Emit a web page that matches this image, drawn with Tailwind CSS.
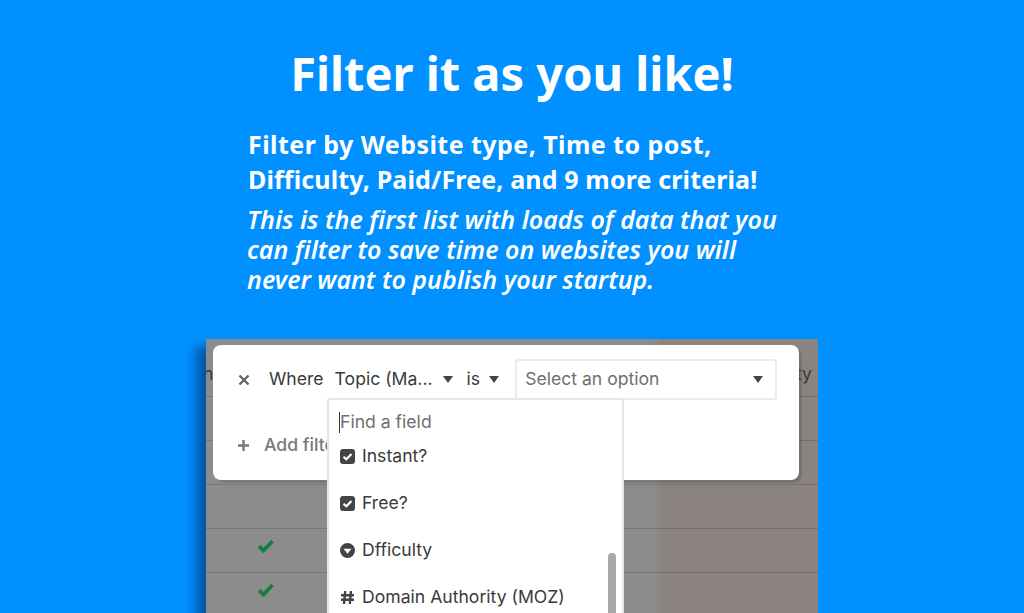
<!doctype html>
<html>
<head>
<meta charset="utf-8">
<script src="https://cdn.jsdelivr.net/npm/@tailwindcss/browser@4"></script>
</head>
<body class="m-0 h-[613px] w-[1024px] overflow-hidden bg-[#0090ff] font-['Noto_Sans','Lato',sans-serif] text-white">
  <div class="flex flex-col items-center">
    <h1 class="mt-[43px] h-[60px] text-center text-[47px] leading-[60px] font-bold">Filter it as you like!</h1>
    <div class="mt-[24px] w-[530px] pl-[1px] text-[25px] leading-[35px] font-bold">
      <p class="tracking-[0.45px]">Filter by Website type, Time to post,</p>
      <p class="tracking-[0.14px]">Difficulty, Paid/Free, and 9 more criteria!</p>
    </div>
    <div class="mt-[7px] w-[530px] text-[25px] leading-[30px] font-semibold italic">
      <p>This is the first list with loads of data that you</p>
      <p>can filter to save time on websites you will</p>
      <p>never want to publish your startup.</p>
    </div>
    <div class="relative mt-[45px] h-[274px] w-[612px] bg-[linear-gradient(90deg,#8c8c8c_0,#8c8c8c_447px,#8a8380_455px,#8a8380_100%)] font-['Inter',sans-serif] text-[#3a3a3a] shadow-[-10px_8px_10px_rgba(0,30,80,0.5)]">
      <div class="flex h-full flex-col overflow-hidden pt-[14px]">
        <div class="flex h-[44px] shrink-0 items-center justify-between border-b border-black/15 pr-[6px] text-[17.6px]"><span class="-ml-[3px]">n</span><span>ty</span></div>
        <div class="h-[44px] shrink-0 border-b border-black/15"></div>
        <div class="h-[44px] shrink-0 border-b border-black/15"></div>
        <div class="h-[44px] shrink-0 border-b border-black/15"></div>
        <div class="flex h-[44px] shrink-0 items-start border-b border-black/15 pt-[9px] pl-[51px]"><svg class="h-[16px] w-[18px]" viewBox="0 0 18 16"><path d="M2 8.5 6.5 12.5 15.5 3" fill="none" stroke="#15803d" stroke-width="3.8"/></svg></div>
        <div class="flex h-[44px] shrink-0 items-start border-b border-black/15 pt-[9px] pl-[51px]"><svg class="h-[16px] w-[18px]" viewBox="0 0 18 16"><path d="M2 8.5 6.5 12.5 15.5 3" fill="none" stroke="#15803d" stroke-width="3.8"/></svg></div>
      </div>
      <div class="absolute top-[6px] left-[7px] h-[135px] w-[586px] rounded-[8px] bg-white shadow-[3px_3px_0_rgba(0,0,0,0.12)]">
        <div class="flex h-[68px] items-center pt-[1px] text-[17.6px]">
          <svg class="ml-[25px] h-[12px] w-[12px]" viewBox="0 0 12 12"><path d="M1.5 1.5 10.5 10.5M10.5 1.5 1.5 10.5" stroke="#666" stroke-width="2.4"/></svg>
          <span class="ml-[19px]">Where</span>
          <span class="ml-[11px]">Topic (Ma...</span>
          <svg class="ml-[10px] h-[7px] w-[10px]" viewBox="0 0 10 7"><path d="M0 0H10L5 7Z" fill="#444"/></svg>
          <span class="ml-[14px]">is</span>
          <svg class="ml-[9px] h-[7px] w-[10px]" viewBox="0 0 10 7"><path d="M0 0H10L5 7Z" fill="#444"/></svg>
          <div class="ml-[16px] flex h-[41px] w-[262px] items-center justify-between rounded-[3px] border-2 border-[#ebebeb] pr-[12px] pl-[8px] text-[#6f6f6f]">
            <span>Select an option</span>
            <svg class="h-[7px] w-[10px]" viewBox="0 0 10 7"><path d="M0 0H10L5 7Z" fill="#444"/></svg>
          </div>
        </div>
        <div class="mt-[19px] flex items-center text-[17.6px] font-medium text-[#777]">
          <svg class="ml-[25px] h-[11px] w-[11px]" viewBox="0 0 11 11"><path d="M5.5 0V11M0 5.5H11" stroke="#777" stroke-width="2.4"/></svg>
          <span class="ml-[15px]">Add filter</span>
        </div>
      </div>
      <div class="absolute top-[59px] left-[121px] h-[215px] w-[297px] overflow-hidden rounded-t-[3px] border-2 border-b-0 border-[#e6e6e6] bg-white text-[17.6px]">
        <div class="mt-[10px] ml-[10px] flex h-[24px] items-center text-[#6f6f6f]"><span class="h-[21px] w-[1px] bg-[#333]"></span><span>Find a field</span></div>
        <div class="mt-[10px] flex h-[24px] items-center pl-[11px]"><svg class="mr-[7px] h-[15px] w-[15px]" viewBox="0 0 15 15"><rect width="15" height="15" rx="3" fill="#444"/><path d="M3.5 7.7 6.3 10.2 11.5 5" fill="none" stroke="#fff" stroke-width="2.2"/></svg><span>Instant?</span></div>
        <div class="mt-[23px] flex h-[24px] items-center pl-[11px]"><svg class="mr-[7px] h-[15px] w-[15px]" viewBox="0 0 15 15"><rect width="15" height="15" rx="3" fill="#444"/><path d="M3.5 7.7 6.3 10.2 11.5 5" fill="none" stroke="#fff" stroke-width="2.2"/></svg><span>Free?</span></div>
        <div class="mt-[23px] flex h-[24px] items-center pl-[11px]"><svg class="mr-[7px] h-[15px] w-[15px]" viewBox="0 0 15 15"><circle cx="7.5" cy="7.5" r="7.5" fill="#444"/><path d="M3.5 5.8H11.5L7.5 10.8Z" fill="#fff"/></svg><span>Dfficulty</span></div>
        <div class="mt-[23px] flex h-[24px] items-center pl-[11px]"><svg class="mr-[7px] h-[15px] w-[15px]" viewBox="0 0 15 15"><path d="M5.2 1 4 14M11 1 9.8 14M1 5.2H14M1 9.8H14" fill="none" stroke="#444" stroke-width="2.4"/></svg><span>Domain Authority (MOZ)</span></div>
        <div class="absolute top-[153px] right-[6px] h-[70px] w-[8px] rounded-[4px] bg-[#a8a8a8]"></div>
      </div>
    </div>
  </div>
</body>
</html>
